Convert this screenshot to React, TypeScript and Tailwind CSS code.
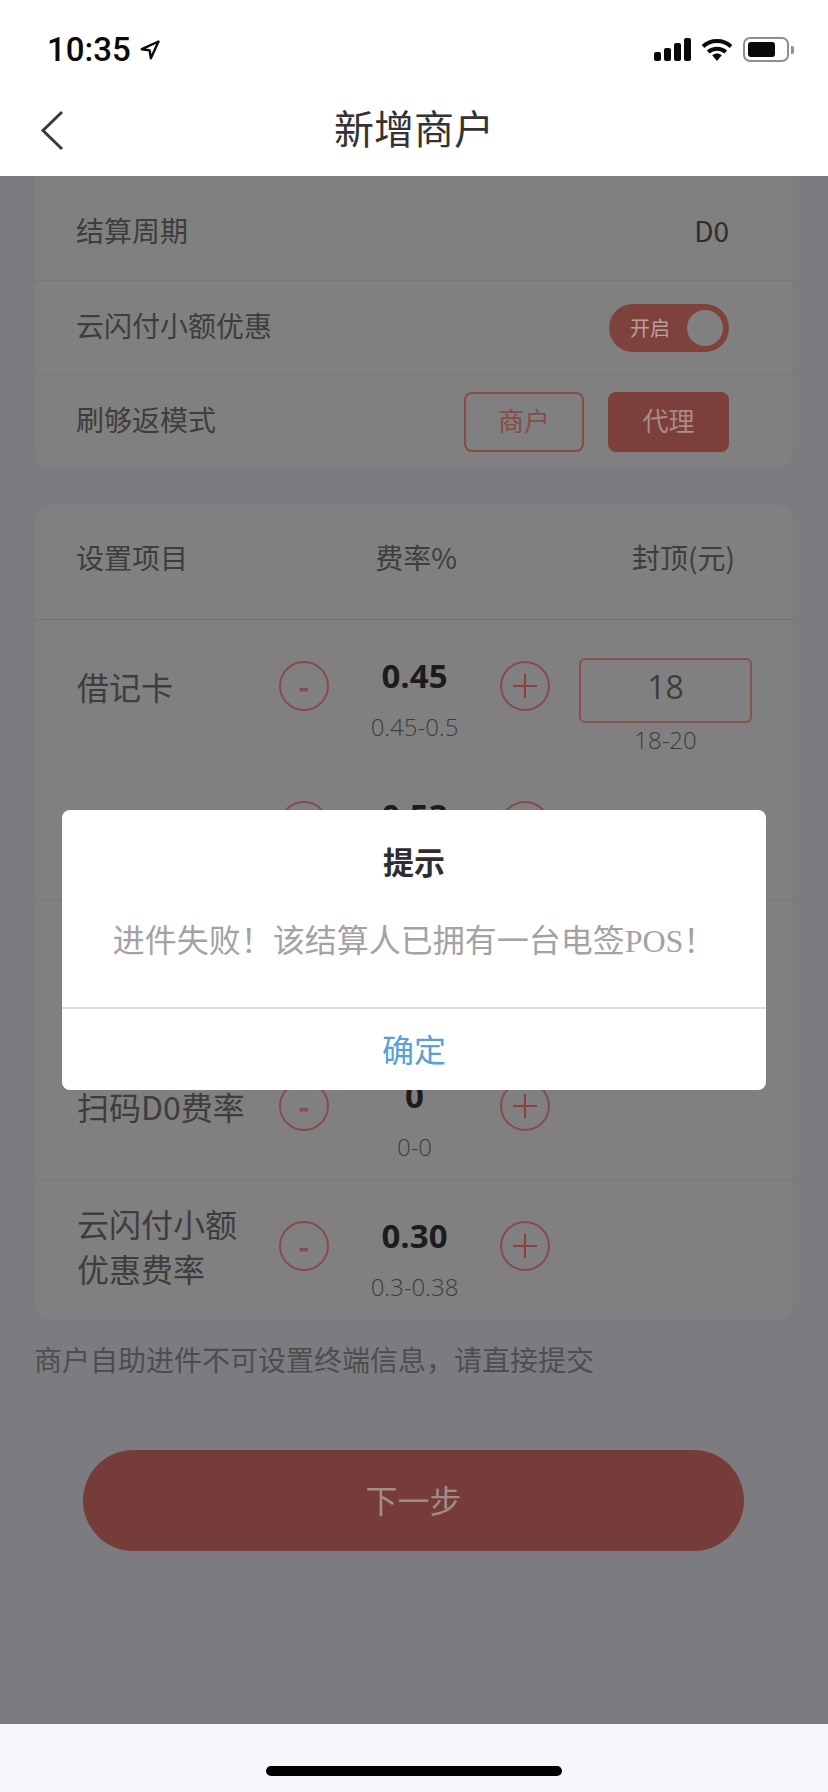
const rates = [
  { label: "借记卡", value: "0.45", range: "0.45-0.5", cap: true },
  { value: "0.53", divider: true },
  {},
  { label: "扫码D0费率", value: "0", range: "0-0", divider: true },
  { label: "云闪付小额\n优惠费率", value: "0.30", range: "0.3-0.38" },
];

type Rate = {
  label?: string;
  value?: string;
  range?: string;
  cap?: boolean;
  divider?: boolean;
};

function StatusBar() {
  return (
    <div className="flex h-[88px] items-start justify-between pl-[47px] pr-[34px] pt-[32px]">
      <div className="flex items-center gap-[9px]">
        <span className="font-['Roboto',sans-serif] text-[33px] font-medium leading-[36px] text-[#0a0a0a]">
          10:35
        </span>
        <svg width="20" height="20" viewBox="0 0 20 20" fill="none">
          <path
            d="M18.5 1.5 1.8 9.2l7.8 1.2 1.3 7.8z"
            stroke="#0a0a0a"
            strokeWidth="2.4"
            strokeLinejoin="round"
          />
        </svg>
      </div>
      <div className="flex items-center gap-[10px] pt-[5px]">
        <svg width="37" height="24" viewBox="0 0 37 24" fill="#0a0a0a">
          <rect x="0" y="14" width="7" height="9" rx="2" />
          <rect x="10" y="10" width="7" height="13" rx="2" />
          <rect x="20" y="5" width="7" height="18" rx="2" />
          <rect x="30" y="0" width="7" height="23" rx="2" />
        </svg>
        <svg width="32" height="24" viewBox="0 0 32 24" fill="none">
          <path d="M2 8.5c8-7.2 20-7.2 28 0" stroke="#0a0a0a" strokeWidth="4" />
          <path d="M7.2 14c5.2-4.4 12.4-4.4 17.6 0" stroke="#0a0a0a" strokeWidth="4" />
          <path d="M11.2 17.2c3-2.4 6.6-2.4 9.6 0L16 23z" fill="#0a0a0a" />
        </svg>
        <div className="flex items-center gap-[2px]">
          <div className="flex h-[25px] w-[46px] items-center rounded-[7px] border-2 border-[#8e8e8e] p-[3px]">
            <div className="h-[15px] w-[27px] rounded-[3px] bg-[#0a0a0a]" />
          </div>
          <div className="h-[8px] w-[3px] rounded-r-[2px] bg-[#8e8e8e]" />
        </div>
      </div>
    </div>
  );
}

function NavBar() {
  return (
    <div className="relative flex h-[88px] items-center justify-center pb-[10px]">
      <svg
        className="absolute left-[40px] top-[22px]"
        width="24"
        height="41"
        viewBox="0 0 24 41"
        fill="none"
      >
        <path d="M22 2 3 20.5 22 39" stroke="#3a3a3a" strokeWidth="3" />
      </svg>
      <h1 className="text-[40px] leading-[48px] text-[#333333]">新增商户</h1>
    </div>
  );
}

function SettingsCard() {
  return (
    <div className="rounded-b-[16px] bg-[#808080] text-[28px] text-[#3d3d3d]">
      <div className="flex h-[105px] items-center justify-between border-b border-[#777777] pl-[41px] pr-[64px] pt-[4px]">
        <span>结算周期</span>
        <span className="text-[#2e2e2e]">D0</span>
      </div>
      <div className="flex h-[94px] items-center justify-between border-b border-[#777777] pl-[41px] pr-[64px]">
        <span className="-mt-[6px]">云闪付小额优惠</span>
        <div className="flex h-[48px] w-[120px] items-center justify-between rounded-full bg-[#7f413c] pl-[21px] pr-[6px]">
          <span className="text-[20px] text-[#b9a09c]">开启</span>
          <div className="h-[36px] w-[36px] rounded-full bg-[#808080]" />
        </div>
      </div>
      <div className="flex h-[93px] items-center justify-between pl-[41px] pr-[64px]">
        <span className="-mt-[6px]">刷够返模式</span>
        <div className="flex gap-[24px] text-[26px]">
          <div className="flex h-[60px] w-[120px] items-center justify-center rounded-[8px] border-2 border-[#864c48] pb-[4px] text-[#864c48]">
            商户
          </div>
          <div className="flex h-[60px] w-[121px] items-center justify-center rounded-[8px] bg-[#7c3f3b] pb-[4px] text-[#a88b87]">
            代理
          </div>
        </div>
      </div>
    </div>
  );
}

function CircleButton({ kind }: { kind: "minus" | "plus" }) {
  return (
    <div className="flex h-[50px] w-[50px] shrink-0 items-center justify-center rounded-full border-2 border-[#864c4c]">
      {kind === "minus" ? (
        <span className="-mt-[2px] text-[32px] font-bold leading-[32px] text-[#8c4c49]">-</span>
      ) : (
        <svg width="24" height="24" viewBox="0 0 24 24" stroke="#8f3f3f" strokeWidth="2">
          <path d="M0 12h24M12 0v24" />
        </svg>
      )}
    </div>
  );
}

function RateRow({ rate }: { rate: Rate }) {
  // rows that sit wholly behind the dialog only keep their height
  if (!rate.value) return <div className="h-[140px]" />;

  return (
    <div
      className={`flex h-[140px] items-start pl-[42px] pt-[41px] ${
        rate.divider ? "border-b border-[#777777]" : ""
      }`}
    >
      <div className="flex h-[50px] w-[202px] shrink-0 items-center whitespace-pre-line text-[32px] leading-[45px] text-[#3d3d3d]">
        {rate.label}
      </div>
      <CircleButton kind="minus" />
      <div className="flex w-[171px] shrink-0 flex-col items-center font-['Open_Sans',sans-serif]">
        <span className="-mt-px text-[33px] font-bold leading-[32px] text-[#1c1c1c]">
          {rate.value}
        </span>
        {rate.range && (
          <span className="mt-[20px] text-[24px] font-light leading-[30px] text-[#3d3d3d]">
            {rate.range}
          </span>
        )}
      </div>
      <CircleButton kind="plus" />
      {rate.cap && (
        <div className="-mt-[3px] ml-[29px] flex w-[173px] shrink-0 flex-col items-center font-['Open_Sans',sans-serif]">
          <div className="flex h-[65px] w-full items-center justify-center rounded-[6px] border-2 border-[#8a4f4f] pb-[8px] text-[32px] text-[#3d3d3d]">
            18
          </div>
          <span className="text-[24px] font-light leading-[34px] text-[#3d3d3d]">18-20</span>
        </div>
      )}
    </div>
  );
}

function RatesCard() {
  return (
    <div className="mt-[37px] rounded-[16px] bg-[#808080]">
      <div className="flex h-[115px] items-center justify-between border-b border-[#747474] pb-[10px] pl-[41px] pr-[58px] text-[28px] text-[#3d3d3d]">
        <span>设置项目</span>
        <span className="pl-[12px]">费率%</span>
        <span>封顶(元)</span>
      </div>
      {rates.map((rate, i) => (
        <RateRow key={i} rate={rate} />
      ))}
    </div>
  );
}

function AlertDialog() {
  return (
    <div className="absolute left-[62px] top-[810px] w-[704px] overflow-hidden rounded-[8px] bg-white">
      <div className="flex h-[199px] flex-col items-center border-b-2 border-[#dcdcdc]">
        <h2 className="mt-[34px] text-[31px] font-bold leading-[34px] text-[#2e2e2e]">提示</h2>
        <p className="mt-[41px] whitespace-nowrap font-['Liberation_Serif','Noto_Sans_CJK_SC',serif] text-[32px] leading-[44px] text-[#a3a3a3]">
          进件失败！该结算人已拥有一台电签POS！
        </p>
      </div>
      <div className="flex h-[81px] items-center justify-center pb-[4px] text-[32px] text-[#5a9fd6]">
        确定
      </div>
    </div>
  );
}

export default function App() {
  return (
    <div className="relative flex h-[1792px] w-[828px] flex-col overflow-hidden bg-white font-['Noto_Sans_CJK_SC',sans-serif]">
      <StatusBar />
      <NavBar />
      <main className="flex-1 bg-[#7c7c80] px-[35px]">
        <SettingsCard />
        <RatesCard />
        <p className="-ml-px mt-[19px] text-[28px] leading-[40px] text-[#4d4d4f]">
          商户自助进件不可设置终端信息，请直接提交
        </p>
        <div className="ml-[48px] mr-[49px] mt-[71px] flex h-[101px] items-center justify-center rounded-full bg-[#763c3a] pb-[4px] text-[32px] text-[#a08c89]">
          下一步
        </div>
      </main>
      <div className="flex h-[68px] justify-center bg-[#f7f7fb] pt-[42px]">
        <div className="h-[10px] w-[296px] rounded-full bg-black" />
      </div>
      <AlertDialog />
    </div>
  );
}
